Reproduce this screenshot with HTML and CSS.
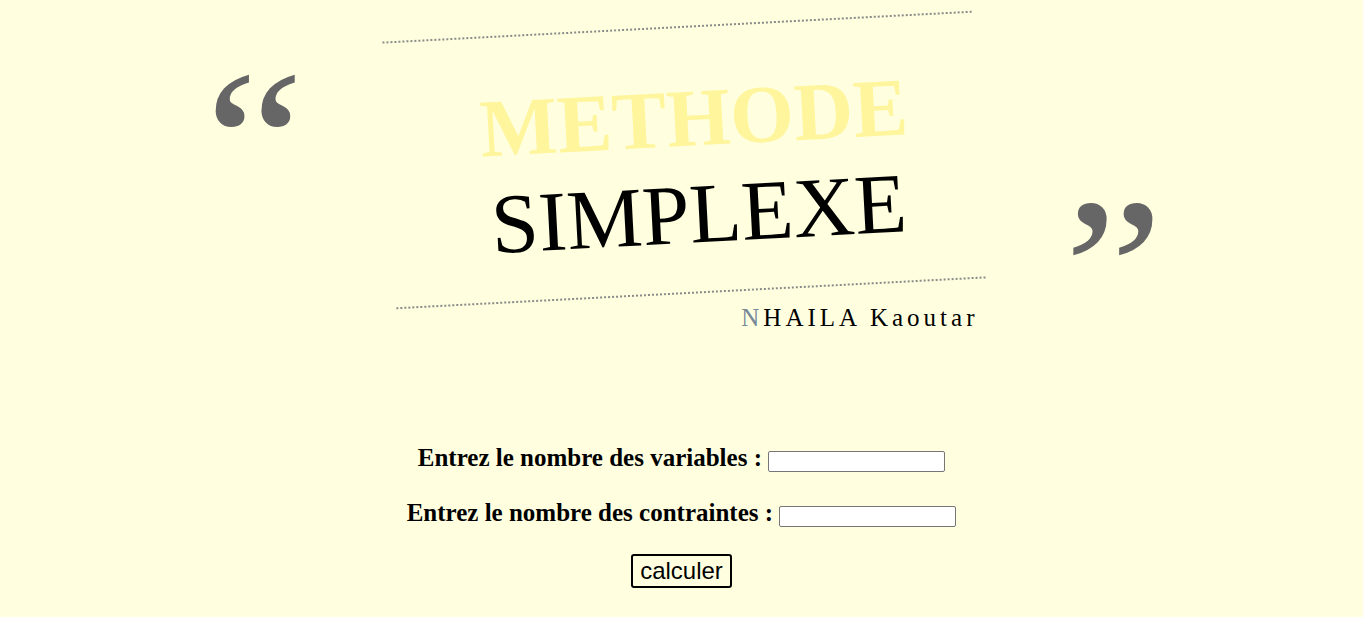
FILE: index.html
```html
<!DOCTYPE html>
<html lang="fr">
<head>
<meta charset="utf-8">
<title>Methode Simplexe</title>
<link rel="stylesheet" href="styles.css">
</head>
<body>
<header class="header">
  <span class="quote quote-open">&ldquo;</span>
  <div class="title-col">
    <div class="title-box">
      <div class="methode">METHODE</div>
      <div class="simplexe">SIMPLEXE</div>
    </div>
    <div class="author"><span class="initial">N</span>HAILA Kaoutar</div>
  </div>
  <span class="quote quote-close">&rdquo;</span>
</header>
<form class="form">
  <div class="field">Entrez le nombre des variables : <input type="text" class="num"></div>
  <div class="field">Entrez le nombre des contraintes : <input type="text" class="num"></div>
  <button type="button" class="btn">calculer</button>
</form>
</body>
</html>
```
FILE: styles.css
```css
html, body {
  margin: 0;
  padding: 0;
}
body {
  background: #ffffe0;
  font-family: "Liberation Serif", "Times New Roman", serif;
  color: #000;
}
.header {
  display: flex;
  justify-content: center;
  gap: 85px;
  padding: 26px 0 0 4px;
}
.quote {
  font-family: "Liberation Serif", serif;
  font-weight: 400;
  font-size: 203px;
  letter-spacing: 8px;
  line-height: 1;
  color: #666666;
  align-self: flex-start;
  transform: scaleX(1.1);
  transform-origin: left top;
}
.quote-open {
  margin-top: 14px;
}
.quote-close {
  margin-top: 142px;
}
.title-col {
  width: 590px;
}
.title-box {
  border-top: 2px dotted #8a8a8a;
  border-bottom: 2px dotted #8a8a8a;
  transform: rotate(-3deg);
  padding: 50px 0 35px 24px;
  display: flex;
  flex-direction: column;
  align-items: center;
  gap: 12px;
}
.methode {
  font-size: 82px;
  font-weight: 700;
  line-height: 1;
  color: #fff59d;
}
.simplexe {
  font-size: 85px;
  line-height: 1;
}
.author {
  text-align: right;
  font-size: 25px;
  letter-spacing: 4px;
  margin-top: 10px;
}
.initial {
  color: #778899;
}
.form {
  display: flex;
  flex-direction: column;
  align-items: center;
  gap: 27px;
  margin-top: 73px;
}
.field {
  font-size: 25px;
  font-weight: 700;
}
.num {
  width: 177px;
  height: 21px;
  box-sizing: border-box;
  border: 1px solid #767676;
  border-radius: 2px;
  padding: 1px 2px;
  background: #fff;
  font: 13.33px Arial, "Liberation Sans", sans-serif;
}
.btn {
  font: 24px "Liberation Sans", Arial, sans-serif;
  color: #000;
  background: transparent;
  border: 2px solid #000;
  border-radius: 3px;
  padding: 1px 7px;
}
```
